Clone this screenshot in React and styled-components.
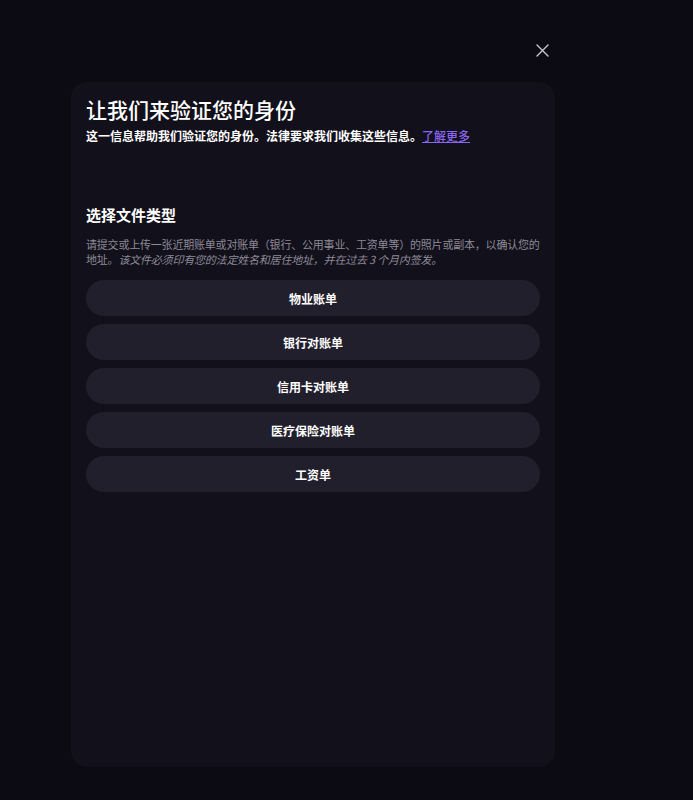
import React from "react";
import styled, { createGlobalStyle } from "styled-components";

const Global = createGlobalStyle`
  html, body { margin: 0; padding: 0; background: #0c0a12; }
  body { font-family: "Noto Sans CJK SC", "Noto Sans", sans-serif; color: #fff; }
`;

const Page = styled.div`
  min-height: 800px;
  padding: 38px 0 0 71px;
  box-sizing: border-box;
`;

const Column = styled.div`
  width: 484px;
  display: flex;
  flex-direction: column;
`;

const TopBar = styled.div`
  display: flex;
  justify-content: flex-end;
  padding-right: 1px;
  margin-bottom: 20px;
`;

const CloseButton = styled.button`
  width: 24px;
  height: 24px;
  padding: 0;
  border: none;
  background: transparent;
  display: flex;
  align-items: center;
  justify-content: center;
  color: #c9c7d0;
  cursor: pointer;
`;

const Card = styled.div`
  background: #12101a;
  border-radius: 16px;
  height: 685px;
  box-sizing: border-box;
  padding: 14px 15px;
  display: flex;
  flex-direction: column;
`;

const Title = styled.h1`
  margin: 0;
  font-size: 21px;
  line-height: 26px;
  font-weight: 500;
  color: #fff;
`;

const Subtitle = styled.p`
  margin: 5px 0 0;
  font-size: 12px;
  line-height: 18px;
  font-weight: 700;
  color: #fff;
`;

const Link = styled.a`
  color: #8b65f5;
  text-decoration: underline;
  font-weight: 500;
`;

const SectionTitle = styled.h2`
  margin: 59px 0 0;
  font-size: 15px;
  line-height: 22px;
  font-weight: 700;
  color: #fff;
`;

const Description = styled.p`
  margin: 11px 0 0;
  font-size: 11px;
  line-height: 15px;
  letter-spacing: -0.2px;
  color: #8d8a97;
`;

const Em = styled.em`
  font-style: italic;
`;

const Options = styled.div`
  margin-top: 13px;
  display: flex;
  flex-direction: column;
  gap: 8px;
`;

const Option = styled.button`
  height: 36px;
  border: none;
  border-radius: 18px;
  background: #221f2c;
  color: #fff;
  font-family: inherit;
  font-size: 12px;
  font-weight: 700;
  cursor: pointer;
`;

const options = ["物业账单", "银行对账单", "信用卡对账单", "医疗保险对账单", "工资单"];

export default function App() {
  return (
    <Page>
      <Global />
      <Column>
        <TopBar>
          <CloseButton aria-label="关闭">
            <svg width="13" height="13" viewBox="0 0 13 13" fill="none">
              <path d="M1 1L12 12M12 1L1 12" stroke="currentColor" strokeWidth="1.4" strokeLinecap="round" />
            </svg>
          </CloseButton>
        </TopBar>
        <Card>
          <Title>让我们来验证您的身份</Title>
          <Subtitle>
            这一信息帮助我们验证您的身份。法律要求我们收集这些信息。<Link href="#">了解更多</Link>
          </Subtitle>
          <SectionTitle>选择文件类型</SectionTitle>
          <Description>
            请提交或上传一张近期账单或对账单（银行、公用事业、工资单等）的照片或副本，以确认您的地址。
            <Em>该文件必须印有您的法定姓名和居住地址，并在过去 3 个月内签发。</Em>
          </Description>
          <Options>
            {options.map((o) => (
              <Option key={o}>{o}</Option>
            ))}
          </Options>
        </Card>
      </Column>
    </Page>
  );
}
